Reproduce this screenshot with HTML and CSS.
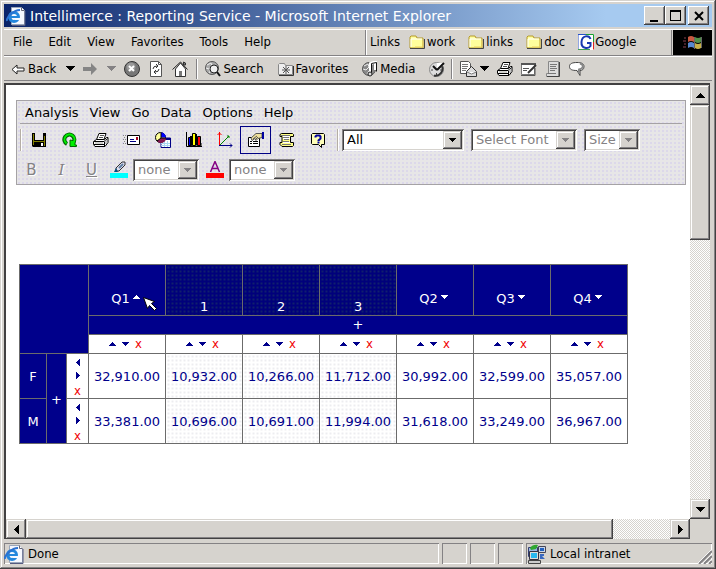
FILE: index.html
```
<!DOCTYPE html>
<html lang="en">
<head>
<meta charset="utf-8">
<title>Intellimerce : Reporting Service</title>
<link rel="stylesheet" href="styles.css">
</head>
<body>
<svg class="sprites" aria-hidden="true">
  <symbol id="down" viewBox="0 0 9 5"><path d="M0 0h9v1H0zM1 1h7v1H1zM2 2h5v1H2zM3 3h3v1H3zM4 4h1v1H4z"/></symbol>
  <symbol id="tri-up" viewBox="0 0 7 4"><path d="M3 0h1v1H3zM2 1h3v1H2zM1 2h5v1H1zM0 3h7v1H0z"/></symbol>
  <symbol id="tri-down" viewBox="0 0 7 4"><path d="M0 0h7v1H0zM1 1h5v1H1zM2 2h3v1H2zM3 3h1v1H3z"/></symbol>
  <symbol id="tri-left" viewBox="0 0 4 7"><path d="M3 0h1v7H3zM2 1h1v5H2zM1 2h1v3H1zM0 3h1v1H0z"/></symbol>
  <symbol id="tri-right" viewBox="0 0 4 7"><path d="M0 0h1v7H0zM1 1h1v5H1zM2 2h1v3H2zM3 3h1v1H3z"/></symbol>
  <symbol id="folder" viewBox="0 0 16 14"><path d="M1 3V2l1-1h5l1 2h6v10H1z" fill="#ffff9c" stroke="#b59a2c"/><path d="M2 12V4h11" fill="none" stroke="#fff"/><path d="M6 12h8V6" fill="none" stroke="#e8d060"/><path d="M1 13.5h14.5V4" fill="none" stroke="#444"/></symbol>
  <symbol id="printer" viewBox="0 0 16 16"><path d="M3.500 7.500L6 1.500h7l-2 6z" fill="#fff" stroke="#000"/><path d="M7 3.500h4M6 5.500h4" stroke="#555"/><path d="M.5 9.500l3-2h8l2-2h1.500v5l-3 4h-10l-1.500-2z" fill="#fff" stroke="#000"/><path d="M1 9.500h10l3.500-3M11.500 10v4M1 12.500h10" fill="none" stroke="#000"/><path d="M2 11h8" stroke="#a8a8a0"/><path d="M13 8v4" stroke="#888"/></symbol>
  <symbol id="page-e" viewBox="0 0 20 20"><path d="M5.500 1.500h10l3 3v14h-13z" fill="#f6f8ff" stroke="#9aa6ba"/><path d="M15.500 1.500v3h3" fill="#fff" stroke="#667"/><path d="M19 5v14.500H6" fill="none" stroke="#555b80"/><circle cx="8" cy="11" r="4.500" fill="none" stroke="#2386dd" stroke-width="3"/><path d="M4 11h9" stroke="#2386dd" stroke-width="2"/><path d="M9 12h6v2H9z" fill="#f6f8ff"/><path d="M1 15C0 11 8 4 14 4" fill="none" stroke="#2b71d0" stroke-width="2"/></symbol>
</svg>

<div class="window">
  <header class="titlebar">
    <svg class="i20"><use href="#page-e"/></svg>
    <h1>Intellimerce : Reporting Service - Microsoft Internet Explorer</h1>
    <div class="winbuttons">
      <button class="winbtn" aria-label="Minimize"><svg viewBox="0 0 16 14"><path d="M3 11h8v2H3z"/></svg></button>
      <button class="winbtn" aria-label="Maximize"><svg viewBox="0 0 16 14"><path d="M2 1h11v11H2zM3 3v8h9V3z" fill-rule="evenodd"/></svg></button>
      <button class="winbtn close" aria-label="Close"><svg viewBox="0 0 16 14"><path d="M4 3l8 8M12 3l-8 8" stroke="#000" stroke-width="2"/></svg></button>
    </div>
  </header>

  <div class="bars">
    <div class="menuband">
      <nav class="menu" aria-label="Browser menu">
        <button>File</button><button>Edit</button><button>View</button><button>Favorites</button><button>Tools</button><button>Help</button>
      </nav>
      <nav class="links" aria-label="Links">
        <span>Links</span>
        <a href="#work"><svg class="i16x14"><use href="#folder"/></svg>work</a>
        <a href="#links"><svg class="i16x14"><use href="#folder"/></svg>links</a>
        <a href="#doc"><svg class="i16x14"><use href="#folder"/></svg>doc</a>
        <a href="#google"><svg class="i16" viewBox="0 0 16 16"><path fill="#fff" d="M0 0h16v16H0z"/><path d="M0 15.500V.5h8" stroke="#2850c8" fill="none"/><path d="M8 .5h7.500V8" stroke="#18a030" fill="none"/><path d="M15.500 8v7.500" stroke="#e02020"/><path d="M0 15.500h12" stroke="#40a050"/><path d="M12.500 5C11 1 4 1 3.500 8s7 7 9 4V9H9" fill="none" stroke="#1838b0" stroke-width="2"/></svg>Google</a>
      </nav>
      <div class="brand"><svg viewBox="0 0 20 18"><path d="M5 3q3-2 6 0v5q-3-2-6 0z" fill="#c85840"/><path d="M12 3q3 2 6 0v5q-3 2-6 0z" fill="#509048"/><path d="M5 9q3-2 6 0v5q-3-2-6 0z" fill="#5888d0"/><path d="M12 9q3 2 6 0v5q-3 2-6 0z" fill="#c8b048"/><path d="M1 4h2M0 7h3M1 10h2M0 13h3" stroke="#8a4050"/><path d="M18.500 3v11M11.500 3v12" stroke="#666"/></svg></div>
    </div>

    <div class="toolband">
      <button class="tool back"><svg class="i14" viewBox="0 0 14 14"><path d="M1 7.500l5-4.500v3h7v3H6v3z" fill="#fff" stroke="#222"/></svg>Back</button>
      <button class="tool drop" aria-label="Back history"><svg class="caret"><use href="#down"/></svg></button>
      <button class="tool forward" aria-label="Forward"><svg class="i14" viewBox="0 0 14 14"><path d="M0 5h8V1l6 6-6 6V9H0z" fill="#858585"/></svg></button>
      <button class="tool drop dim" aria-label="Forward history"><svg class="caret"><use href="#down"/></svg></button>
      <button class="tool" aria-label="Stop"><svg class="i16" viewBox="0 0 16 16"><circle cx="8" cy="8" r="7.500" fill="#777" stroke="#333"/><circle cx="7" cy="6" r="4.500" fill="#999"/><path d="M5 5l5 5M10 5l-5 5" stroke="#fff" stroke-width="2"/></svg></button>
      <button class="tool" aria-label="Refresh"><svg class="i16" viewBox="0 0 16 16"><path d="M2.500.5h8l3 3v12h-11z" fill="#fff" stroke="#555"/><path d="M10.500.5v3h3" fill="none" stroke="#555"/><path d="M5 8q0-3 4-3M8 3l2 2-2 2M11 8q0 3-4 3M8 9l-2 2 2 2" fill="none" stroke="#333"/></svg></button>
      <button class="tool" aria-label="Home"><svg class="i16" viewBox="0 0 16 16"><path d="M3.500 8v7.500h10V8L8.500 2z" fill="#fff" stroke="#333"/><path d="M.5 8.500L8.500 1l7 7.500" fill="none" stroke="#222"/><path d="M11.500 1v3h2V2z" fill="#777" stroke="#333"/><path d="M7 10h3v5H7z" fill="#777"/></svg></button>
      <span class="sep"></span>
      <button class="tool"><svg class="i16" viewBox="0 0 16 16"><circle cx="7" cy="7" r="6.500" fill="#aaa" stroke="#555"/><path d="M2 4l4-2 1 3-3 3-3-1M4 12l2-3" fill="none" stroke="#eee"/><circle cx="9" cy="8" r="4" fill="#eee" stroke="#222"/><path d="M12 11l3 4" stroke="#111" stroke-width="2"/></svg>Search</button>
      <button class="tool gap"><svg class="i16" viewBox="0 0 16 16"><path d="M.5 13.500v-10l1-1h5l1 2h7v9z" fill="#eee" stroke="#888"/><path d="M1 14.500h14.500V5" fill="none" stroke="#333"/><path d="M8 5v8M4 9h8M5 6l6 6M11 6l-6 6" stroke="#555"/></svg>Favorites</button>
      <button class="tool gap"><svg class="i16" viewBox="0 0 16 16"><circle cx="7" cy="8" r="6.500" fill="#888" stroke="#555"/><path d="M2 5l4-2 1 3-3 3-3-1M5 13l2-3" fill="none" stroke="#eee"/><path d="M8.500 13V2.500l5-1.500v8" fill="none" stroke="#fff" stroke-width="3"/><path d="M9.500 13V2.500l5-1v9" fill="none" stroke="#111"/><circle cx="8" cy="13" r="2" fill="#ddd" stroke="#222"/></svg>Media</button>
      <button class="tool history" aria-label="History"><svg class="i16" viewBox="0 0 16 16"><circle cx="7.500" cy="8.500" r="7" fill="#ddd" stroke="#888"/><path d="M13 5a7 7 0 0 1-8 9.500" fill="none" stroke="#333" stroke-width="2"/><path d="M8 9V2h5l2 2z" fill="#fff"/><path d="M8 9L4 5M8 9l7-7" stroke="#111" stroke-width="2"/><path d="M2 9h2M7.500 12v2M11 9h2" stroke="#444"/></svg></button>
      <span class="sep"></span>
      <button class="tool" aria-label="Mail"><svg class="i18" viewBox="0 0 18 16"><path d="M.5.500h8l2 2v10H.5z" fill="#fff" stroke="#555"/><path d="M2 3.500h6M2 5.500h6M2 7.500h5M2 9.500h4" stroke="#777"/><path d="M6.500 10.500l5-5 5 5v5h-10z" fill="#ddd" stroke="#333"/><path d="M7 11l4.500 2 5-2" fill="#fff" stroke="#777"/></svg><svg class="caret"><use href="#down"/></svg></button>
      <button class="tool end" aria-label="Print"><svg class="i16"><use href="#printer"/></svg></button>
      <button class="tool end" aria-label="Edit"><svg class="i16" viewBox="0 0 16 16"><path d="M.5 2.500h13v11H.5z" fill="#fff" stroke="#777"/><path d="M0 3h15" stroke="#555" stroke-width="2"/><path d="M2 7.500h6M2 9.500h4M0 14.500h14V7" fill="none" stroke="#555"/><path d="M7 12l8-8" stroke="#333" stroke-width="2"/></svg></button>
      <button class="tool end" aria-label="Discuss"><svg class="i16" viewBox="0 0 16 16"><path d="M3.500.5h10v15h-12v-3h2z" fill="#ddd" stroke="#888"/><path d="M14.500 1v14.500H2" fill="none" stroke="#444"/><path d="M5 3.500h7M5 5.500h6M5 7.500h7M5 9.500h5M3 12.500h8" stroke="#777"/></svg></button>
      <button class="tool end" aria-label="Messenger"><svg class="i16" viewBox="0 0 16 16"><path d="M8 1.500c4 0 7 1 7 4s-2 4-4 4v5l-3-5C3 9.500.5 8.500.5 5.500s3-4 7.500-4z" fill="#fff" stroke="#444"/><path d="M11 2.500c4 1 4 5-1 6v4" fill="none" stroke="#888" stroke-width="2"/></svg></button>
    </div>
  </div>

  <div class="viewport">
    <main class="page">
      <section class="panel" aria-label="Report tools">
        <nav class="appmenu" aria-label="Report menu">
          <button>Analysis</button><button>View</button><button>Go</button><button>Data</button><button>Options</button><button>Help</button>
        </nav>
        <div class="approw">
          <span class="grip"></span>
          <button class="app" aria-label="Save"><svg class="i16" viewBox="0 0 16 16"><path d="M1 1h14v14H2l-1-1z" fill="#000"/><path d="M4 1h8v7H4z" fill="#e6e4e8"/><path d="M2 2h1v11H2zM13 4h1v10h-1zM3 9h10v1H3z" fill="#848200"/><path d="M5 11h7v3H5z" fill="#000"/><path d="M10 11h2v3h-2z" fill="#fff"/></svg></button>
          <button class="app" aria-label="Refresh"><svg class="i16" viewBox="0 0 16 16"><path d="M5 12A5 5 0 1 1 11 11" fill="none" stroke="#006800" stroke-width="4"/><path d="M8 8v6.500h6.500V13H13V9z" fill="#00f000" stroke="#006800"/><path d="M4.500 11.500A5 5 0 1 1 11.500 10.500" fill="none" stroke="#00f000" stroke-width="2"/></svg></button>
          <button class="app" aria-label="Print"><svg class="i16"><use href="#printer"/></svg></button>
          <button class="app" aria-label="Mail"><svg class="i18" viewBox="0 0 18 16"><path d="M4.500 3.500h12v9h-12z" fill="#fff" stroke="#000"/><path d="M7 7.500h4M7 9.500h6" stroke="#000084"/><path d="M13 5h2v3h-2z" fill="#a00020"/><path d="M0 3.500h3M1 5.500h2M0 7.500h3M1 9.500h2M0 11.500h3" stroke="#888" stroke-dasharray="1"/></svg></button>
          <button class="app" aria-label="Chart and table"><svg class="i16" viewBox="0 0 16 16"><path d="M6 6h9.500v9.500H6z" fill="#fff" stroke="#000084"/><path d="M6 7h10" stroke="#000084" stroke-width="2"/><path d="M9.500 9v6M12.500 9v6M6 11.500h9M6 13.500h9" stroke="#a8d8f0"/><circle cx="5.500" cy="5.500" r="5" fill="#ffff9c" stroke="#000"/><path d="M6 5.500V.5a5 5 0 0 1 5 5z" fill="#0000ff"/><path d="M6 6h5a5 5 0 0 1-9 3z" fill="#841850"/><path d="M6 1v5L2 9M6 6h5" stroke="#000" fill="none"/></svg></button>
          <button class="app" aria-label="Bar chart"><svg class="i16" viewBox="0 0 16 16"><path d="M.5 0v14.500H16" fill="none" stroke="#000"/><path d="M2 13l2-2h12v3H2z" fill="#777"/><path d="M2.500 5.500h3v8h-3z" fill="#0000ff" stroke="#000"/><path d="M6.500 1.500h3v12h-3z" fill="#ffff00" stroke="#000"/><path d="M11.500 4.500h3v9h-3z" fill="#ff0000" stroke="#000"/><path d="M5 4v9M10 2v11" stroke="#000" stroke-width="2"/></svg></button>
          <button class="app" aria-label="Axes"><svg class="i16" viewBox="0 0 16 16"><path d="M2.500 13V0M.5 3l2-2 2 2" stroke="#ff0000" fill="none"/><path d="M3 13l9-9M10 4h2v2" stroke="#008400" fill="none"/><path d="M2 13.500h13M13 11.500l2 2-2 2" stroke="#000084" fill="none"/></svg></button>
          <button class="app active" aria-label="Properties" aria-pressed="true"><svg class="i16" viewBox="0 0 16 16"><path d="M.5 5.500h11v9H.5z" fill="#fff" stroke="#000"/><path d="M2 9.500h2M5 9.500h5M2 11.500h2M5 11.500h5" stroke="#000"/><path d="M3 6l5-4.500h6v4l-4 1-2 2-1-2-3 2z" fill="#efe09c" stroke="#555"/><path d="M5 7l4-3M7 8l3-3" stroke="#555"/><path d="M14 0h2v7h-2z" fill="#0000a0"/></svg></button>
          <button class="app" aria-label="Script"><svg class="i16" viewBox="0 0 16 16"><path d="M2.500 1.500h11l1 1v2h-3v6h3v3l-1 1H3l-2-2v-2h2v-6H1v-2z" fill="#ffff84" stroke="#000"/><path d="M2 3.500h9M4 5.500h6M5 7.500h5M4 9.500h6M3 12.500h9" stroke="#777"/><path d="M4 4.500h7M4 6.500h7M4 10.500h7" stroke="#fff"/></svg></button>
          <button class="app" aria-label="Help"><svg class="i16" viewBox="0 0 16 16"><path d="M2.500 1.500h11l1 1v10h-3v3l-3-3h-6l-1-1v-9z" fill="#ffffb8" stroke="#000"/><path d="M5.500 5.500V4.500l1-1h3l1 1v2l-2 2v1M8.500 10v1.500" fill="none" stroke="#0000a0" stroke-width="2"/></svg></button>
          <span class="grip second"></span>
          <span class="combo wide"><select aria-label="Scope"><option>All</option></select><span class="arrow"><svg class="mini"><use href="#tri-down"/></svg></span></span>
          <span class="combo font"><select aria-label="Font" disabled><option>Select Font</option></select><span class="arrow"><svg class="mini"><use href="#tri-down"/></svg></span></span>
          <span class="combo size"><select aria-label="Size" disabled><option>Size</option></select><span class="arrow"><svg class="mini"><use href="#tri-down"/></svg></span></span>
        </div>
        <div class="approw format">
          <button class="fmt bold" disabled>B</button><button class="fmt italic" disabled>I</button><button class="fmt underline" disabled>U</button>
          <svg class="swatch" viewBox="0 0 18 18"><path d="M0 12h18v5H0z" fill="#00ffff"/><path d="M6 7l6-6h3v3l-6 6H6z" fill="#dde" stroke="#333"/><path d="M6 7L4 11h4z" fill="#005080"/><path d="M9 7l4-4" stroke="#6080a0" stroke-width="2"/></svg>
          <span class="combo color"><select aria-label="Highlight color" disabled><option>none</option></select><span class="arrow"><svg class="mini"><use href="#tri-down"/></svg></span></span>
          <svg class="swatch after" viewBox="0 0 18 18"><path d="M0 12h18v5H0z" fill="#ff0000"/><path d="M4.500 11L9 .5 13.500 11M6 7.500h6" fill="none" stroke="#840084" stroke-width="1.500"/></svg>
          <span class="combo color"><select aria-label="Text color" disabled><option>none</option></select><span class="arrow"><svg class="mini"><use href="#tri-down"/></svg></span></span>
        </div>
      </section>

      <table class="report">
        <colgroup><col class="c-name"><col class="c-plus"><col class="c-ctl"><col span="7" class="c-val"></colgroup>
        <thead>
          <tr class="quarters">
            <th colspan="3" rowspan="3"></th>
            <th class="q pointed">Q1<button aria-label="Collapse Q1"><svg class="up"><use href="#tri-up"/></svg></button>
              <svg class="cursor" viewBox="0 0 14 15" aria-hidden="true"><path d="M.5.500l11 4-3 2 5 5-2 2-5-5-2 3z" fill="#fff" stroke="#000"/></svg></th>
            <th class="sub">1</th><th class="sub">2</th><th class="sub">3</th>
            <th class="q">Q2<button aria-label="Expand Q2"><svg class="up"><use href="#tri-down"/></svg></button></th>
            <th class="q">Q3<button aria-label="Expand Q3"><svg class="up"><use href="#tri-down"/></svg></button></th>
            <th class="q">Q4<button aria-label="Expand Q4"><svg class="up"><use href="#tri-down"/></svg></button></th>
          </tr>
          <tr class="thin"><th colspan="7"><button>+</button></th></tr>
          <tr class="thin controls">
            <td><div><button aria-label="Sort up"><svg><use href="#tri-up"/></svg></button><button aria-label="Sort down"><svg><use href="#tri-down"/></svg></button><button class="x">x</button></div></td>
            <td><div><button aria-label="Sort up"><svg><use href="#tri-up"/></svg></button><button aria-label="Sort down"><svg><use href="#tri-down"/></svg></button><button class="x">x</button></div></td>
            <td><div><button aria-label="Sort up"><svg><use href="#tri-up"/></svg></button><button aria-label="Sort down"><svg><use href="#tri-down"/></svg></button><button class="x">x</button></div></td>
            <td><div><button aria-label="Sort up"><svg><use href="#tri-up"/></svg></button><button aria-label="Sort down"><svg><use href="#tri-down"/></svg></button><button class="x">x</button></div></td>
            <td><div><button aria-label="Sort up"><svg><use href="#tri-up"/></svg></button><button aria-label="Sort down"><svg><use href="#tri-down"/></svg></button><button class="x">x</button></div></td>
            <td><div><button aria-label="Sort up"><svg><use href="#tri-up"/></svg></button><button aria-label="Sort down"><svg><use href="#tri-down"/></svg></button><button class="x">x</button></div></td>
            <td><div><button aria-label="Sort up"><svg><use href="#tri-up"/></svg></button><button aria-label="Sort down"><svg><use href="#tri-down"/></svg></button><button class="x">x</button></div></td>
          </tr>
        </thead>
        <tbody>
          <tr>
            <th>F</th><th rowspan="2"><button>+</button></th>
            <td><div class="rowctl"><button aria-label="Move left"><svg><use href="#tri-left"/></svg></button><button aria-label="Move right"><svg><use href="#tri-right"/></svg></button><button class="x">x</button></div></td>
            <td class="num">32,910.00</td><td class="num sub">10,932.00</td><td class="num sub">10,266.00</td><td class="num sub">11,712.00</td><td class="num">30,992.00</td><td class="num">32,599.00</td><td class="num">35,057.00</td>
          </tr>
          <tr>
            <th>M</th>
            <td><div class="rowctl"><button aria-label="Move left"><svg><use href="#tri-left"/></svg></button><button aria-label="Move right"><svg><use href="#tri-right"/></svg></button><button class="x">x</button></div></td>
            <td class="num">33,381.00</td><td class="num sub">10,696.00</td><td class="num sub">10,691.00</td><td class="num sub">11,994.00</td><td class="num">31,618.00</td><td class="num">33,249.00</td><td class="num">36,967.00</td>
          </tr>
        </tbody>
      </table>
    </main>

    <div class="vbar">
      <button class="sb" aria-label="Scroll up"><svg class="ud" viewBox="0 0 9 5"><path d="M4 0h1v1H4zM3 1h3v1H3zM2 2h5v1H2zM1 3h7v1H1zM0 4h9v1H0z"/></svg></button>
      <div class="thumb"></div><div class="track"></div>
      <button class="sb" aria-label="Scroll down"><svg class="ud"><use href="#down"/></svg></button>
    </div>
    <div class="hbar">
      <button class="sb" aria-label="Scroll left"><svg class="lr" viewBox="0 0 5 9"><path d="M4 0h1v9H4zM3 1h1v7H3zM2 2h1v5H2zM1 3h1v3H1zM0 4h1v1H0z"/></svg></button>
      <div class="thumb"></div><div class="track"></div>
      <button class="sb" aria-label="Scroll right"><svg class="lr" viewBox="0 0 5 9"><path d="M0 0h1v9H0zM1 1h1v7H1zM2 2h1v5H2zM3 3h1v3H3zM4 4h1v1H4z"/></svg></button>
    </div>
    <div class="corner"></div>
  </div>

  <footer class="status">
    <div class="pane main"><svg class="i20"><use href="#page-e"/></svg>Done</div>
    <div class="pane small"></div><div class="pane small"></div><div class="pane small"></div>
    <div class="pane zone"><svg class="i20" viewBox="0 0 20 20"><path d="M2.500 3.500h9v9h-9z" fill="#9ab8e0" stroke="#333c70"/><path d="M12.500 2.500h7v6h-7z" fill="#c8d4e8" stroke="#445"/><path d="M14 4h4v3h-4z" fill="#2060c0"/><path d="M3.500 7.500h9v8h-9z" fill="#ddd" stroke="#334"/><path d="M5 9h6v5H5z" fill="#28b8f0"/><path d="M2.500 16.500h12v3h-12z" fill="#ccc" stroke="#444"/><path d="M4 4q3-4 8-3l-2 4-5 1z" fill="#30a830"/><path d="M14 10h4v2h-2l3 3h-5z" fill="#3868c0"/></svg>Local intranet
      <svg class="resize" viewBox="0 0 15 15"><path d="M0 15L15 0M5 15L15 5M10 15l5-5" stroke="#fff"/><path d="M2 15L15 2M7 15l8-8M12 15l3-3" stroke="#848284" stroke-width="2"/></svg></div>
  </footer>
</div>
</body>
</html>
```
FILE: styles.css
```
:root {
  --face: #d6d3ce;
  --mid: #848284;
  --dark: #424142;
  --navy: #00008b;
  --line: #6b6b6b;
  --raised: inset -1px -1px var(--dark), inset 1px 1px var(--face), inset -2px -2px var(--mid), inset 2px 2px #fff;
}
* { box-sizing: border-box; }
body { margin: 0; background: var(--face); color: #000; font: 13px/16px "DejaVu Sans Condensed", "DejaVu Sans", sans-serif; }
button { margin: 0; padding: 0; border: 0; background: none; color: inherit; font: inherit; }
a { color: inherit; text-decoration: none; }
svg { display: block; flex: none; }
.sprites { position: absolute; width: 0; height: 0; }
.i14 { width: 14px; height: 14px; }
.i16 { width: 16px; height: 16px; }
.i16x14 { width: 16px; height: 14px; }
.i18 { width: 18px; height: 16px; }
.i20 { width: 20px; height: 20px; }
.caret { width: 9px; height: 5px; }
.mini { width: 7px; height: 4px; }

.window { display: flex; flex-direction: column; min-height: 100vh; padding: 4px; background: var(--face); box-shadow: var(--raised); }

.titlebar { display: flex; align-items: center; height: 23px; padding: 0 3px 0 2px; background: linear-gradient(90deg, #0a246a, #a6caf0 85%); color: #fff; }
.titlebar h1 { flex: 1; margin: 0 0 0 4px; overflow: hidden; font: 14px/20px "DejaVu Sans", sans-serif; white-space: nowrap; }
.winbuttons { display: flex; }
.winbtn { display: grid; place-items: center; width: 21px; height: 19px; background: var(--face); box-shadow: inset -1px -1px var(--dark), inset 1px 1px #fff, inset -2px -2px var(--mid); }
.winbtn svg { width: 16px; height: 14px; }
.winbtn.close { margin-left: 2px; }

.bars { margin-top: 2px; border-top: 1px solid #fff; }
.menuband { display: flex; height: 26px; border-bottom: 1px solid var(--mid); }
.menu { display: flex; flex: 1; gap: 16px; padding: 0 0 2px 9px; border-right: 1px solid var(--mid); }
.links { display: flex; align-items: center; width: 306px; gap: 9px; padding: 0 0 2px 3px; border-left: 1px solid #fff; border-right: 1px solid var(--mid); }
.links a { display: flex; align-items: center; gap: 2px; margin-right: 4px; }
.links a:last-child { gap: 1px; }
.brand { display: grid; place-items: center; width: 39px; margin-left: 1px; background: #000; }
.brand svg { width: 20px; height: 18px; }
.toolband { display: flex; align-items: center; height: 25px; padding-left: 7px; border-top: 1px solid #fff; border-bottom: 1px solid var(--mid); }
.tool { display: flex; align-items: center; gap: 2px; margin-right: 8px; }
.tool.back { gap: 3px; }
.tool.drop { margin-left: 2px; }
.tool.drop.dim { fill: var(--mid); }
.tool.gap { margin-left: 6px; }
.tool.history { margin-left: 6px; margin-right: 6px; }
.sep { width: 2px; height: 20px; margin-right: 7px; border-left: 1px solid var(--mid); border-right: 1px solid #fff; }

.viewport { display: grid; flex: 1; grid-template-columns: 1fr 20px; grid-template-rows: 1fr 20px; margin: 2px 2px 2px 0; border: 2px solid var(--dark); border-width: 2px 0 0 2px; }
.page { min-width: 0; padding: 15px 4px 20px 10px; background: #fff; font-family: "DejaVu Sans", sans-serif; }
.vbar { display: flex; flex-direction: column; }
.hbar { display: flex; }
.corner { background: var(--face); }
.sb { display: grid; flex: none; place-items: center; width: 20px; height: 20px; background: var(--face); box-shadow: var(--raised); }
.ud { width: 9px; height: 5px; }
.lr { width: 5px; height: 9px; }
.thumb { background: var(--face); box-shadow: var(--raised); }
.track { background: repeating-conic-gradient(#fff 0 25%, var(--face) 0 50%) 0 0 / 2px 2px; }
.vbar .thumb { flex: 135; }
.vbar .track { flex: 259; }
.hbar .thumb { flex: 587; }
.hbar .track { flex: 57; }

.panel { height: 85px; padding: 0 3px; border: 1px solid #a5a2a5; background: radial-gradient(circle, #dcd8ea 0 1px, transparent 1px) 0 0 / 4px 4px #e7e6e7; }
.appmenu { display: flex; gap: 11px; height: 23px; padding: 1px 5px 0; border-bottom: 1px solid #a5a2a5; }
.approw { display: flex; align-items: center; height: 32px; }
.grip { width: 2px; height: 22px; margin-right: 1px; border-left: 1px solid #b5aea5; border-right: 1px solid #fff; }
.grip.second { margin: 0 3px 0 4px; }
.app { display: grid; flex: none; place-items: center; width: 31px; height: 28px; }
.app.active { border: 1px solid #000084; }
.combo { display: flex; flex: none; height: 22px; padding: 2px; background: #fff; box-shadow: inset 1px 1px var(--mid), inset -1px -1px #fff, inset 2px 2px var(--dark), inset -2px -2px var(--face); }
.combo select { flex: 1; min-width: 0; padding: 0 0 0 3px; border: 0; outline: 0; background: #fff; appearance: none; color: #000; font: 13px/18px "DejaVu Sans", sans-serif; opacity: 1; }
.combo select:disabled { color: var(--mid); }
.combo select:disabled + .arrow { fill: var(--mid); }
.arrow { display: grid; place-items: center; width: 19px; background: var(--face); box-shadow: var(--raised); }
.combo.wide { width: 122px; margin-right: 7px; }
.combo.font { width: 106px; margin-right: 7px; }
.combo.size { width: 56px; }
.combo.color { width: 66px; margin-left: 5px; }
.format { height: 28px; }
.fmt { width: 30px; padding-right: 7px; color: var(--mid); font-size: 15px; text-shadow: 1px 1px #fff; }
.fmt.italic { font-family: "DejaVu Serif", serif; font-style: italic; }
.fmt.underline { text-decoration: underline; }
.swatch { width: 18px; height: 18px; }
.swatch.after { margin-left: 7px; }

.report { width: 609px; margin: 79px 0 0 3px; border-collapse: collapse; table-layout: fixed; color: var(--navy); }
.c-name { width: 27px; }
.c-plus { width: 20px; }
.c-ctl { width: 22px; }
.c-val { width: 77px; }
.report th, .report td { padding: 0; border: 1px solid var(--line); text-align: center; font-weight: normal; }
.report th { background: var(--navy); color: #fff; fill: #fff; }
.report td { background: #fff; fill: var(--navy); }
.report td.num, .report tbody th { padding-top: 2px; }
.report th.sub { background: radial-gradient(circle, #10206c 0 1px, transparent 1px) 0 0 / 4px 4px #00007b; }
.report td.sub { background: radial-gradient(circle, #ededf0 0 1px, transparent 1px) 0 0 / 4px 4px #fff; }
.quarters { height: 51px; }
.report .quarters th { vertical-align: bottom; }
.report .quarters .q { padding: 0 3px 8px 0; }
.q button { margin-left: 3px; vertical-align: 4px; }
.up { width: 7px; height: 4px; }
.pointed { position: relative; }
.cursor { position: absolute; left: 54px; top: 32px; width: 14px; height: 15px; }
.thin { height: 19px; line-height: 16px; }
.controls div { display: flex; justify-content: center; gap: 6px; padding-right: 3px; }
.controls svg { width: 7px; height: 4px; }
.report .x { color: #f00000; font: 13px/16px "DejaVu Sans Condensed", sans-serif; }
.report tbody tr { height: 45px; }
.rowctl { display: flex; flex-direction: column; align-items: center; gap: 6px; padding-top: 3px; }
.rowctl svg { width: 4px; height: 7px; }
.report .rowctl .x { line-height: 12px; }

.status { display: flex; gap: 3px; height: 24px; padding: 2px 0 1px; }
.pane { display: flex; align-items: center; gap: 4px; box-shadow: inset 1px 1px var(--mid), inset -1px -1px #fff; }
.pane.main { flex: 1; }
.pane.small { width: 25px; }
.pane.zone { width: 186px; }
.resize { align-self: flex-end; width: 15px; height: 15px; margin-left: auto; }
```
